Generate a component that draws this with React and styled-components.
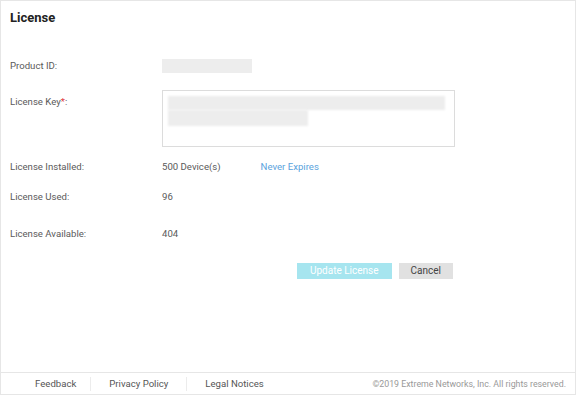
import React from "react";
import styled, { createGlobalStyle } from "styled-components";

const Global = createGlobalStyle`
  html, body { margin: 0; padding: 0; background: #fff; }
  body { font-family: Roboto, "Liberation Sans", Arial, sans-serif; }
  * { box-sizing: border-box; }
`;

const Page = styled.div`
  width: 576px;
  height: 395px;
  border: 1px solid #e6e6e6;
  display: flex;
  flex-direction: column;
  background: #fff;
`;

const Header = styled.div`
  height: 55px;
  padding: 9px 0 0 9px;
`;

const Title = styled.h1`
  margin: 0;
  font-size: 13px;
  line-height: 16px;
  font-weight: 700;
  color: #222;
`;

const Form = styled.div`
  flex: 1;
  display: flex;
  flex-direction: column;
`;

const Row = styled.div`
  display: grid;
  grid-template-columns: 152px auto 1fr;
  align-items: ${(p) => (p.$top ? "start" : "center")};
  min-height: 20px;
  margin-top: ${(p) => p.$mt || 0}px;
  padding-left: 9px;
`;

const Label = styled.div`
  font-size: 9.6px;
  color: #5a5a5a;
  line-height: 20px;
  padding-top: ${(p) => p.$pt || 0}px;
`;

const Req = styled.span`
  color: #e0393e;
`;

const Value = styled.div`
  font-size: 9.6px;
  color: #5a5a5a;
  line-height: 20px;
`;

const Blur = styled.div`
  width: ${(p) => p.$w}px;
  height: ${(p) => p.$h}px;
  background: #ededed;
  filter: blur(${(p) => p.$b || 0.6}px);
`;

const KeyBox = styled.div`
  width: 293px;
  height: 57px;
  border: 1px solid #dcdcdc;
  padding: 5px 0 0 5px;
  display: flex;
  flex-direction: column;
`;

const Link = styled.a`
  font-size: 9.6px;
  color: #5aa3dd;
  margin-left: 40px;
  line-height: 20px;
  text-decoration: none;
`;

const Actions = styled.div`
  display: flex;
  justify-content: flex-end;
  gap: 7px;
  width: 452px;
  margin-top: ${(p) => p.$mt}px;
`;

const Button = styled.button`
  height: 16px;
  border: none;
  padding: 0 ${(p) => p.$px}px;
  font-family: inherit;
  font-size: 10px;
  line-height: 16px;
  background: ${(p) => (p.$primary ? "#a6e5ef" : "#e1e1e1")};
  color: ${(p) => (p.$primary ? "#fff" : "#444")};
  cursor: pointer;
`;

const Footer = styled.div`
  height: 22px;
  border-top: 1px solid #e6e6e6;
  display: flex;
  align-items: center;
  padding: 0 9px 0 16px;
`;

const FootLink = styled.a`
  font-size: 9.6px;
  color: #555;
  text-decoration: none;
  padding: 0 ${(p) => p.$pr || 18}px 0 ${(p) => p.$pl || 18}px;
  line-height: 14px;
  border-right: ${(p) => (p.$sep ? "1px solid #ececec" : "none")};
`;

const Copy = styled.div`
  margin-left: auto;
  font-size: 8.8px;
  color: #999;
`;

export default function App() {
  return (
    <>
      <Global />
      <Page>
        <Header>
          <Title>License</Title>
        </Header>
        <Form>
          <Row>
            <Label>Product ID:</Label>
            <Blur $w={90} $h={14} />
          </Row>
          <Row $top $mt={14}>
            <Label $pt={2}>
              License Key<Req>*</Req>:
            </Label>
            <KeyBox>
              <Blur $w={277} $h={14} $b={1} />
              <Blur $w={140} $h={16} $b={1} />
            </KeyBox>
          </Row>
          <Row $mt={10}>
            <Label>License Installed:</Label>
            <Value>500 Device(s)</Value>
            <Link>Never Expires</Link>
          </Row>
          <Row $mt={10}>
            <Label>License Used:</Label>
            <Value>96</Value>
          </Row>
          <Row $mt={17}>
            <Label>License Available:</Label>
            <Value>404</Value>
          </Row>
          <Actions $mt={19}>
            <Button $primary $px={13}>Update License</Button>
            <Button $px={12}>Cancel</Button>
          </Actions>
        </Form>
        <Footer>
          <FootLink $sep $pr={14}>Feedback</FootLink>
          <FootLink $sep>Privacy Policy</FootLink>
          <FootLink>Legal Notices</FootLink>
          <Copy>©2019 Extreme Networks, Inc. All rights reserved.</Copy>
        </Footer>
      </Page>
    </>
  );
}
